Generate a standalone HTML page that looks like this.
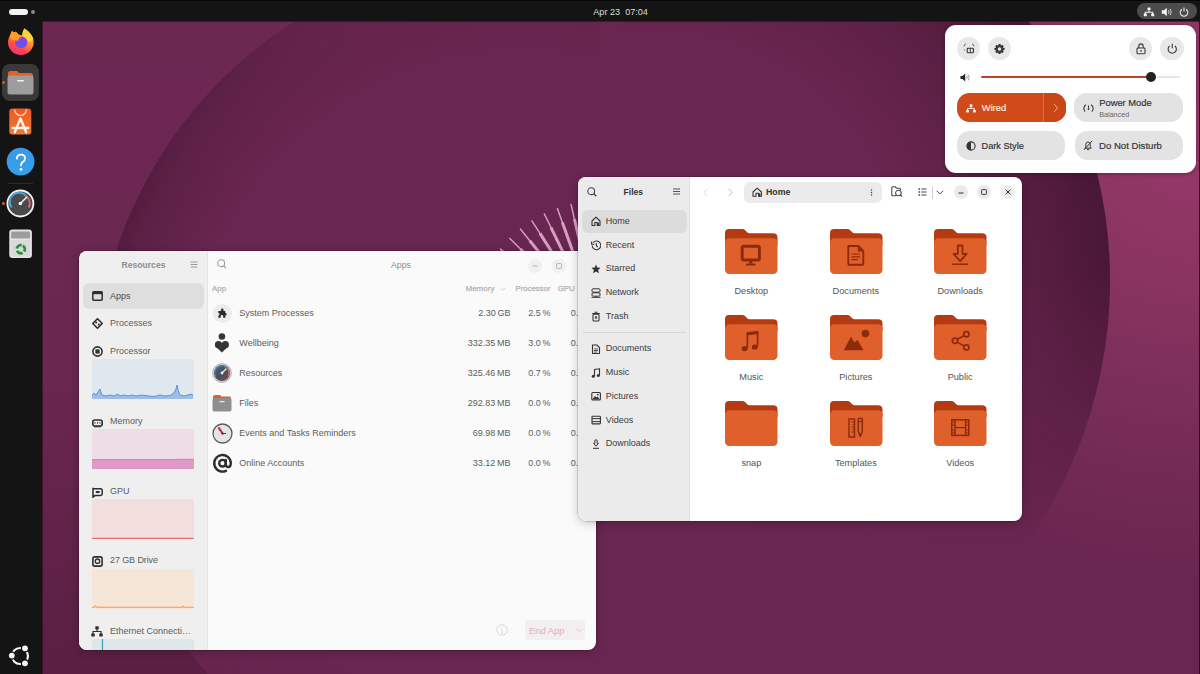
<!DOCTYPE html>
<html><head><meta charset="utf-8">
<style>
*{box-sizing:border-box;margin:0;padding:0}
html,body{width:1200px;height:674px;overflow:hidden;background:#6a2650;font-family:"Liberation Sans",sans-serif}
.abs{position:absolute}
#wall{position:absolute;left:0;top:0;width:1200px;height:674px}
#topbar{position:absolute;left:0;top:0;width:1200px;height:21px;background:#141414;border-top:1px solid #050505;box-shadow:0 1px 0 rgba(40,5,25,.55);z-index:2}
#dock{position:absolute;left:0;top:20px;width:42px;height:654px;background:#141414;box-shadow:1px 0 0 rgba(40,5,25,.55);z-index:1}
.win{position:absolute;border-radius:8px;overflow:hidden;box-shadow:0 0 0 0.5px rgba(0,0,0,.25),0 2px 10px rgba(0,0,0,.22)}
#res{left:79px;top:251px;width:517px;height:399px;background:#fafafa}
#res .side{position:absolute;left:0;top:0;width:129px;height:399px;background:#efefef;border-right:1px solid #e4e4e4}
#files{left:578px;top:177px;width:444px;height:344px;background:#fff}
#files .side{position:absolute;left:0;top:0;width:112px;height:344px;background:#ebebeb;border-right:1px solid #dedede}
#qs{position:absolute;left:945px;top:25px;width:251px;height:148px;background:#fff;border-radius:11px;box-shadow:0 1px 4px rgba(0,0,0,.3)}
.t{position:absolute;white-space:nowrap;line-height:1}
</style></head><body>
<svg id="wall" width="1200" height="674" viewBox="0 0 1200 674">
  <defs>
    <radialGradient id="pinkg" cx="1200" cy="120" r="460" gradientUnits="userSpaceOnUse">
      <stop offset="0" stop-color="#98396b"/>
      <stop offset="0.35" stop-color="#8a3461"/>
      <stop offset="0.7" stop-color="#762c57"/>
      <stop offset="1" stop-color="#692650"/>
    </radialGradient>
    <radialGradient id="tlg" cx="40" cy="20" r="300" gradientUnits="userSpaceOnUse">
      <stop offset="0" stop-color="#6a2852"/>
      <stop offset="0.5" stop-color="#6e2853"/>
      <stop offset="1" stop-color="#6e2853" stop-opacity="0"/>
    </radialGradient>
    <radialGradient id="rimL" cx="524" cy="384" r="429" gradientUnits="userSpaceOnUse">
      <stop offset="0" stop-color="#4a1836" stop-opacity="0"/>
      <stop offset="0.78" stop-color="#4a1836" stop-opacity="0"/>
      <stop offset="0.95" stop-color="#4a1836" stop-opacity="0.4"/>
      <stop offset="1" stop-color="#4a1836" stop-opacity="0.68"/>
    </radialGradient>
    <radialGradient id="rimR" cx="655" cy="281" r="455" gradientUnits="userSpaceOnUse">
      <stop offset="0" stop-color="#4a1836" stop-opacity="0"/>
      <stop offset="0.55" stop-color="#4a1836" stop-opacity="0"/>
      <stop offset="0.8" stop-color="#471633" stop-opacity="0.45"/>
      <stop offset="0.96" stop-color="#421430" stop-opacity="0.8"/>
      <stop offset="1" stop-color="#421430" stop-opacity="0.88"/>
    </radialGradient>
    <linearGradient id="fadeL" x1="0" y1="0" x2="0" y2="674" gradientUnits="userSpaceOnUse">
      <stop offset="0" stop-color="#fff" stop-opacity="0.2"/>
      <stop offset="0.1" stop-color="#fff" stop-opacity="0.6"/>
      <stop offset="0.3" stop-color="#fff" stop-opacity="1"/>
      <stop offset="0.6" stop-color="#fff" stop-opacity="0.8"/>
      <stop offset="0.9" stop-color="#fff" stop-opacity="0.1"/>
    </linearGradient>
    <linearGradient id="fadeR" x1="0" y1="0" x2="0" y2="674" gradientUnits="userSpaceOnUse">
      <stop offset="0" stop-color="#fff" stop-opacity="1"/>
      <stop offset="0.4" stop-color="#fff" stop-opacity="0.9"/>
      <stop offset="0.62" stop-color="#fff" stop-opacity="0.35"/>
      <stop offset="0.8" stop-color="#fff" stop-opacity="0"/>
    </linearGradient>
    <linearGradient id="outLg" x1="0" y1="0" x2="0" y2="674" gradientUnits="userSpaceOnUse">
      <stop offset="0" stop-color="#6c2852"/>
      <stop offset="0.55" stop-color="#6a2750"/>
      <stop offset="1" stop-color="#5a1f43"/>
    </linearGradient>
    <mask id="mL"><rect width="600" height="674" fill="url(#fadeL)"/></mask>
    <mask id="mR"><rect x="620" width="580" height="674" fill="url(#fadeR)"/></mask>
    <mask id="outR"><rect width="1200" height="674" fill="#fff"/><circle cx="655" cy="281" r="455" fill="#000"/></mask>
    <mask id="outL"><rect width="1200" height="674" fill="#fff"/><circle cx="524" cy="384" r="429" fill="#000"/></mask>
  </defs>
  <rect width="1200" height="674" fill="#692650"/>
  <rect width="1200" height="674" fill="url(#pinkg)" mask="url(#outR)"/>
  <rect width="600" height="674" fill="url(#outLg)" mask="url(#outL)"/>
  <circle cx="524" cy="384" r="429" fill="url(#rimL)" mask="url(#mL)"/>
  <circle cx="655" cy="281" r="455" fill="url(#rimR)" mask="url(#mR)"/>
  <g><path d="M485.5 273.1L499.0 279.6" stroke="#d6a2c3" stroke-width="1.4" stroke-linecap="round"/><path d="M499.0 279.6L545.9 302.1" stroke="#d3a0c1" stroke-width="3"/><path d="M492.3 260.7L505.0 268.6" stroke="#d6a2c3" stroke-width="1.4" stroke-linecap="round"/><path d="M505.0 268.6L549.1 296.2" stroke="#d3a0c1" stroke-width="3"/><path d="M500.5 249.1L512.2 258.4" stroke="#d6a2c3" stroke-width="1.4" stroke-linecap="round"/><path d="M512.2 258.4L553.0 290.7" stroke="#d3a0c1" stroke-width="3"/><path d="M509.9 238.5L520.5 249.1" stroke="#d6a2c3" stroke-width="1.4" stroke-linecap="round"/><path d="M520.5 249.1L557.4 285.7" stroke="#d3a0c1" stroke-width="3"/><path d="M520.4 229.0L529.8 240.7" stroke="#d6a2c3" stroke-width="1.4" stroke-linecap="round"/><path d="M529.8 240.7L562.4 281.2" stroke="#d3a0c1" stroke-width="3"/><path d="M531.9 220.8L540.0 233.4" stroke="#d6a2c3" stroke-width="1.4" stroke-linecap="round"/><path d="M540.0 233.4L567.9 277.3" stroke="#d3a0c1" stroke-width="3"/><path d="M544.3 213.9L550.9 227.3" stroke="#d6a2c3" stroke-width="1.4" stroke-linecap="round"/><path d="M550.9 227.3L573.7 274.1" stroke="#d3a0c1" stroke-width="3"/><path d="M557.4 208.4L562.4 222.5" stroke="#d6a2c3" stroke-width="1.4" stroke-linecap="round"/><path d="M562.4 222.5L579.9 271.5" stroke="#d3a0c1" stroke-width="3"/><path d="M571.0 204.4L574.4 219.0" stroke="#d6a2c3" stroke-width="1.4" stroke-linecap="round"/><path d="M574.4 219.0L586.3 269.6" stroke="#d3a0c1" stroke-width="3"/><path d="M585.0 201.9L586.7 216.8" stroke="#d6a2c3" stroke-width="1.4" stroke-linecap="round"/><path d="M586.7 216.8L592.9 268.4" stroke="#d3a0c1" stroke-width="3"/><path d="M599.1 201.0L599.2 216.0" stroke="#d6a2c3" stroke-width="1.4" stroke-linecap="round"/><path d="M599.2 216.0L599.6 268.0" stroke="#d3a0c1" stroke-width="3"/><path d="M613.3 201.7L611.7 216.6" stroke="#d6a2c3" stroke-width="1.4" stroke-linecap="round"/><path d="M611.7 216.6L606.3 268.3" stroke="#d3a0c1" stroke-width="3"/></g>
  <rect x="1199" y="0" width="1" height="674" fill="#2a0c20"/>
</svg>

<div id="topbar">
  <div class="abs" style="left:9px;top:8px;width:19px;height:6px;border-radius:3px;background:#f2f2f2"></div>
  <div class="abs" style="left:31px;top:9px;width:4px;height:4px;border-radius:2px;background:#8a8a8a"></div>
  <div class="t" style="left:593.3px;top:6.6px;font-size:9.1px;color:#dedede">Apr 23&nbsp;&nbsp;07:04</div>
  <div class="abs" style="left:1137px;top:2px;width:60px;height:16px;border-radius:8px;background:#4c4c4c"></div>
  <svg class="abs" style="left:1143px;top:6px" width="12" height="10" viewBox="0 0 12 10"><rect x="4.5" y="0.5" width="3" height="2.6" rx=".6" fill="#f4f4f4"/><path d="M6 3v2M2.3 7V5.2h7.4V7" stroke="#f4f4f4" stroke-width="1.1" fill="none"/><rect x="0.8" y="6.6" width="3" height="2.6" rx=".6" fill="#f4f4f4"/><rect x="8.2" y="6.6" width="3" height="2.6" rx=".6" fill="#f4f4f4"/></svg>
  <svg class="abs" style="left:1161px;top:6px" width="12" height="10" viewBox="0 0 12 10"><path d="M0.8 3.3h2.2L5.8 0.8v8.4L3 6.7H0.8z" fill="#f4f4f4"/><path d="M7.5 3.2q1 1.8 0 3.6M9.2 1.8q2 3.2 0 6.4" stroke="#cfcfcf" stroke-width="1" fill="none"/></svg>
  <svg class="abs" style="left:1179px;top:6px" width="10" height="10" viewBox="0 0 10 10"><path d="M3 2.2A3.8 3.8 0 1 0 7 2.2" stroke="#e8e8e8" stroke-width="1.1" fill="none"/><path d="M5 0.6v4" stroke="#e8e8e8" stroke-width="1.1"/></svg>
</div>
<div id="dock">
  <svg class="abs" style="left:6px;top:7px" width="30" height="30" viewBox="0 0 30 30">
    <defs>
      <linearGradient id="ffo" x1="0.8" y1="0" x2="0.25" y2="1"><stop offset="0" stop-color="#ffe03a"/><stop offset="0.35" stop-color="#ffa12a"/><stop offset="0.7" stop-color="#ff4a4a"/><stop offset="1" stop-color="#f0317a"/></linearGradient>
      <radialGradient id="ffp" cx="0.45" cy="0.75" r="0.9"><stop offset="0" stop-color="#5b5cf0"/><stop offset="0.7" stop-color="#8a3ee0"/><stop offset="1" stop-color="#b53bd0"/></radialGradient>
    </defs>
    <circle cx="14.8" cy="15.2" r="12.8" fill="url(#ffo)"/>
    <path d="M1.5 0 L5 5.2 L6.2 3.6 L7.6 5.6 L9.8 4.8 L12.5 7.5 L16.2 8.6 L17.2 3.5 L18.2 0z" fill="#141414"/>
    <path d="M16.2 9 Q16.5 4 18.3 1.2 Q25 5.5 27.4 12 L24 15z" fill="#ffd23a"/>
    <circle cx="15.2" cy="15.3" r="6" fill="url(#ffp)"/>
    <path d="M4 9 L5 5.2 L6.2 3.6 L7.6 5.6 L9.8 4.8 L12.5 7.5 L16.5 9.2 Q12.5 11 12 14 Q9.5 12.8 7.5 13.5 L4.5 12z" fill="#ff9a22"/>
  </svg>
  <div class="abs" style="left:2px;top:44px;width:37px;height:37px;border-radius:8px;background:#393939"></div>
  <div class="abs" style="left:2px;top:61px;width:3px;height:3px;border-radius:2px;background:#e0542a"></div>
  <svg class="abs" style="left:7px;top:50px" width="27" height="25" viewBox="0 0 27 25">
    <path d="M1 3.5Q1 1 3.5 1H10L12 3H24Q26 3 26 5.5V9H1z" fill="#e2602a"/>
    <rect x="0.5" y="5.5" width="26" height="19" rx="2.5" fill="#9d9d9d"/>
    <rect x="10" y="10" width="7" height="1.6" rx=".8" fill="#f2f2f2"/>
  </svg>
  <svg class="abs" style="left:9px;top:88px" width="23" height="27" viewBox="0 0 23 27">
    <defs><linearGradient id="acg" x1="0" y1="0" x2="0" y2="1"><stop offset="0" stop-color="#ec5a22"/><stop offset="1" stop-color="#f07a36"/></linearGradient></defs>
    <rect x="0.3" y="0.5" width="22" height="26" rx="3" fill="url(#acg)"/>
    <path d="M5.7 1.5a5.8 6 0 0 0 11.6 0" stroke="#fde3d2" stroke-width="1.2" fill="none"/>
    <path d="M11.5 10.5L5.8 24.2M11.5 10.5L17.2 24.2M3.6 20H19.4" stroke="#fff3ec" stroke-width="2.3" fill="none" stroke-linecap="round"/>
  </svg>
  <svg class="abs" style="left:6px;top:127px" width="29" height="29" viewBox="0 0 29 29">
    <defs><linearGradient id="hlp" x1="0" y1="0" x2="0" y2="1"><stop offset="0" stop-color="#3d98e6"/><stop offset="1" stop-color="#35a0ea"/></linearGradient></defs>
    <circle cx="14.6" cy="14.6" r="13.9" fill="url(#hlp)"/>
    <path d="M10.8 11.6Q11 7.6 15 7.6T19 11.4Q19 13.8 16.6 15.1Q15 16 15 18.4" stroke="#fff" stroke-width="1.8" fill="none" stroke-linecap="round"/>
    <circle cx="15" cy="22.4" r="1.4" fill="#fff"/>
  </svg>
  <div class="abs" style="left:8px;top:163px;width:25px;height:1px;background:#2c2c2c"></div>
  <svg class="abs" style="left:6px;top:169px" width="29" height="29" viewBox="0 0 29 29">
    <circle cx="14.4" cy="14.5" r="13" fill="#4a4a4a" stroke="#f4f4f4" stroke-width="1.8"/>
    <path d="M5.6 18.5A9.2 9.2 0 0 1 20.5 7.5" stroke="#49a3df" stroke-width="2" fill="none"/>
    <path d="M20.5 7.5A9.2 9.2 0 0 1 22.8 18.5" stroke="#d8647a" stroke-width="2" fill="none"/>
    <path d="M14.4 14.5L20.6 8.3" stroke="#f4f4f4" stroke-width="1.5" stroke-linecap="round"/>
    <circle cx="14.4" cy="14.5" r="1.8" fill="#f4f4f4"/>
  </svg>
  <div class="abs" style="left:2px;top:182px;width:3px;height:3px;border-radius:2px;background:#e0542a"></div>
  <svg class="abs" style="left:9px;top:209px" width="24" height="30" viewBox="0 0 24 30">
    <rect x="0.3" y="0.6" width="22.6" height="28.4" rx="3.2" fill="#e4e4e4"/>
    <rect x="2.1" y="2.6" width="19" height="7" rx="1.4" fill="#9d9d9d"/>
    <path d="M1.8 11H21.4L21 26.5Q20.8 27.4 19.8 27.4H3.4Q2.4 27.4 2.2 26.5z" fill="#d9d9d9"/>
    <circle cx="11.8" cy="20.2" r="4" fill="none" stroke="#2f8f3c" stroke-width="2.8" stroke-dasharray="6.5 1.9" transform="rotate(-60 11.8 20.2)"/>
  </svg>
  <svg class="abs" style="left:8px;top:624px" width="25" height="25" viewBox="0 0 25 25">
    <circle cx="12" cy="12" r="8" stroke="#f4f4f4" stroke-width="2.2" fill="none"/>
    <circle cx="17" cy="4.3" r="4.2" fill="#141414"/><circle cx="3.8" cy="11.6" r="4.2" fill="#141414"/><circle cx="17" cy="19.3" r="4.2" fill="#141414"/>
    <circle cx="17" cy="4.3" r="2.9" fill="#f4f4f4"/>
    <circle cx="3.8" cy="11.6" r="2.9" fill="#f4f4f4"/>
    <circle cx="17" cy="19.3" r="2.9" fill="#f4f4f4"/>
  </svg>
</div>

<div id="res" class="win">
<div class="side"></div>
<div class="t" style="left:-85.50px;width:300px;text-align:center;top:9.72px;font-size:8.6px;color:#8e8e8e;font-weight:700;">Resources</div>
<svg class="abs" style="left:111px;top:10px" width="8" height="7" viewBox="0 0 8 7"><path d="M0.5 1h7M0.5 3.5h7M0.5 6h7" stroke="#9a9a9a" stroke-width="1"/></svg>
<div class="abs" style="left:4px;top:32px;width:121px;height:26px;background:#dedede;border-radius:6px;"></div>
<svg class="abs" style="left:13px;top:40px" width="11" height="10" viewBox="0 0 11 10"><rect x="0.8" y="0.8" width="9.4" height="8.4" rx="1" fill="none" stroke="#2e2e2e" stroke-width="1.5"/><rect x="0.8" y="0.8" width="9.4" height="2.4" fill="#2e2e2e"/></svg>
<div class="t" style="left:31.00px;top:41.08px;font-size:9px;color:#4a4a4a;font-weight:400;">Apps</div>
<svg class="abs" style="left:13px;top:67px" width="11" height="11" viewBox="0 0 11 11"><path d="M5.5 0.8L10.2 5.5L5.5 10.2L0.8 5.5z" fill="none" stroke="#2e2e2e" stroke-width="1.6" stroke-linejoin="round"/><circle cx="4.2" cy="4.6" r="1" fill="#2e2e2e"/><circle cx="6.8" cy="6.4" r="1" fill="#2e2e2e"/></svg>
<div class="t" style="left:31.00px;top:68.38px;font-size:9px;color:#5c5c5c;font-weight:400;">Processes</div>
<svg class="abs" style="left:13px;top:95px" width="11" height="11" viewBox="0 0 11 11"><circle cx="5.5" cy="5.5" r="4.6" fill="none" stroke="#2e2e2e" stroke-width="1.6"/><rect x="3.4" y="3.4" width="4.2" height="4.2" fill="#2e2e2e"/></svg>
<div class="t" style="left:31.00px;top:95.68px;font-size:9px;color:#5c5c5c;font-weight:400;">Processor</div>
<svg class="abs" style="left:13px;top:108px" width="102" height="40" viewBox="0 0 102 40"><rect width="102" height="40" rx="2" fill="#dfe7ef"/><path d="M0 40 L0 37 L2 34 L4 36 L6 33 L8 30 L10 36 L14 37 L18 36 L22 37 L26 35 L28 37 L32 36 L36 37 L40 36 L44 37 L50 36 L56 37 L62 37.5 L68 36 L72 37 L78 36.5 L82 34 L84 30 L85 26 L86 31 L88 36 L92 37 L96 36 L99 35 L101 36 L101 40z" fill="#9dbde6"/><path d="M0 37 L2 34 L4 36 L6 33 L8 30 L10 36 L14 37 L18 36 L22 37 L26 35 L28 37 L32 36 L36 37 L40 36 L44 37 L50 36 L56 37 L62 37.5 L68 36 L72 37 L78 36.5 L82 34 L84 30 L85 26 L86 31 L88 36 L92 37 L96 36 L99 35 L101 36" fill="none" stroke="#5b93d9" stroke-width="1"/></svg>
<svg class="abs" style="left:13px;top:168px" width="11" height="9" viewBox="0 0 11 9"><rect x="0.8" y="1" width="9.4" height="6" rx="2" fill="none" stroke="#2e2e2e" stroke-width="1.6"/><path d="M3 3.2v1.5M5.5 3.2v1.5M8 3.2v1.5" stroke="#2e2e2e" stroke-width="1"/><path d="M2 7.8h7" stroke="#2e2e2e" stroke-width="1"/></svg>
<div class="t" style="left:31.00px;top:165.68px;font-size:9px;color:#5c5c5c;font-weight:400;">Memory</div>
<svg class="abs" style="left:13px;top:178px" width="102" height="40" viewBox="0 0 102 40"><rect width="102" height="40" rx="2" fill="#eedde7"/><rect x="0" y="30.5" width="102" height="9.5" fill="#e19ac6"/><path d="M0 30.7H82L86 30.3H102" stroke="#cf7eb0" stroke-width="1" fill="none"/></svg>
<svg class="abs" style="left:13px;top:236px" width="11" height="11" viewBox="0 0 11 11"><path d="M1 0.8v9.4l2.2-1.8H8.5Q10.2 8.4 10.2 6.7V3.5Q10.2 1.8 8.5 1.8H1" fill="none" stroke="#2e2e2e" stroke-width="1.5"/><rect x="3.8" y="4" width="3.8" height="2" fill="#2e2e2e"/></svg>
<div class="t" style="left:31.00px;top:235.78px;font-size:9px;color:#5c5c5c;font-weight:400;">GPU</div>
<svg class="abs" style="left:13px;top:248px" width="102" height="40" viewBox="0 0 102 40"><rect width="102" height="40" rx="2" fill="#f3dede"/><path d="M0 39.3H102" stroke="#e86f78" stroke-width="1.2"/></svg>
<svg class="abs" style="left:13px;top:305px" width="11" height="11" viewBox="0 0 11 11"><rect x="0.9" y="0.9" width="9.2" height="9.2" rx="1.8" fill="none" stroke="#2e2e2e" stroke-width="1.6"/><circle cx="5.5" cy="5.2" r="2.2" fill="none" stroke="#2e2e2e" stroke-width="1.3"/></svg>
<div class="t" style="left:31.00px;top:305.48px;font-size:9px;color:#5c5c5c;font-weight:400;letter-spacing:-0.1px">27 GB Drive</div>
<svg class="abs" style="left:13px;top:318px" width="102" height="40" viewBox="0 0 102 40"><rect width="102" height="40" rx="2" fill="#f6e6d8"/><path d="M0 39H102V38.2H92L91 36.8L90 38.2H40L39 38L30 38.2H5L3.5 36.5L2 38.2H0z" fill="#f6c79a"/><path d="M0 38.2H2L3.5 36.5L5 38.2H90L91 36.8L92 38.2H102" fill="none" stroke="#f0a057" stroke-width="1"/></svg>
<svg class="abs" style="left:12px;top:375px" width="12" height="11" viewBox="0 0 12 11"><rect x="4.3" y="0.3" width="3.4" height="3" fill="#2e2e2e"/><path d="M6 3v2.5M2 8V5.5h8V8" stroke="#2e2e2e" stroke-width="1.2" fill="none"/><rect x="0.3" y="7.5" width="3.4" height="3" fill="#2e2e2e"/><rect x="8.3" y="7.5" width="3.4" height="3" fill="#2e2e2e"/></svg>
<div class="t" style="left:31.00px;top:375.68px;font-size:9px;color:#5c5c5c;font-weight:400;">Ethernet Connecti…</div>
<svg class="abs" style="left:13px;top:388px" width="102" height="12" viewBox="0 0 102 12"><rect width="102" height="20" rx="2" fill="#dde6e9"/><path d="M10.5 0V12" stroke="#3aa0b8" stroke-width="1.2"/></svg>
<svg class="abs" style="left:138px;top:8px" width="10" height="10" viewBox="0 0 10 10"><circle cx="4.2" cy="4.2" r="3.4" fill="none" stroke="#9b9b9b" stroke-width="1.1"/><path d="M6.8 6.8L9.2 9.2" stroke="#9b9b9b" stroke-width="1.2"/></svg>
<div class="t" style="left:172.00px;width:300px;text-align:center;top:9.55px;font-size:8.8px;color:#8e8e8e;font-weight:400;">Apps</div>
<div class="abs" style="left:449px;top:8px;width:14px;height:14px;border-radius:7px;background:#f0f0f0"></div>
<svg class="abs" style="left:453px;top:14px" width="6" height="2" viewBox="0 0 6 2"><path d="M0.5 1h5" stroke="#b5b5b5" stroke-width="1"/></svg>
<div class="abs" style="left:472.5px;top:8px;width:14px;height:14px;border-radius:7px;background:#f0f0f0"></div>
<svg class="abs" style="left:476.5px;top:11.5px" width="6" height="6" viewBox="0 0 6 6"><rect x="0.6" y="0.6" width="4.8" height="4.8" rx=".6" fill="none" stroke="#b5b5b5" stroke-width="1"/></svg>
<div class="t" style="left:133.00px;top:33.61px;font-size:7.9px;color:#b3b3b3;font-weight:400;-webkit-text-stroke:0.25px currentColor">App</div>
<div class="t" style="left:386.50px;top:33.53px;font-size:8.0px;color:#b3b3b3;font-weight:400;-webkit-text-stroke:0.25px currentColor">Memory</div>
<svg class="abs" style="left:421px;top:36px" width="6" height="4" viewBox="0 0 6 4"><path d="M0.5 0.8L3 3.2L5.5 0.8" stroke="#cfcfcf" stroke-width="0.9" fill="none"/></svg>
<div class="t" style="left:436.50px;top:33.74px;font-size:7.75px;color:#b3b3b3;font-weight:400;-webkit-text-stroke:0.25px currentColor">Processor</div>
<div class="t" style="left:478.70px;top:33.61px;font-size:7.9px;color:#b3b3b3;font-weight:400;-webkit-text-stroke:0.25px currentColor">GPU</div>
<div class="t" style="left:160.30px;top:57.88px;font-size:9px;color:#5c5c5c;font-weight:400;">System Processes</div>
<div class="t" style="right:85.50px;top:57.88px;font-size:9px;color:#5c5c5c;font-weight:400;">2.30&#8201;GB</div>
<div class="t" style="right:45.50px;top:57.88px;font-size:9px;color:#5c5c5c;font-weight:400;">2.5&#8201;%</div>
<div class="t" style="left:491.70px;top:57.88px;font-size:9px;color:#5c5c5c;font-weight:400;">0.</div>
<div class="t" style="left:160.30px;top:87.88px;font-size:9px;color:#5c5c5c;font-weight:400;">Wellbeing</div>
<div class="t" style="right:85.50px;top:87.88px;font-size:9px;color:#5c5c5c;font-weight:400;">332.35&#8201;MB</div>
<div class="t" style="right:45.50px;top:87.88px;font-size:9px;color:#5c5c5c;font-weight:400;">3.0&#8201;%</div>
<div class="t" style="left:491.70px;top:87.88px;font-size:9px;color:#5c5c5c;font-weight:400;">0.</div>
<div class="t" style="left:160.30px;top:117.88px;font-size:9px;color:#5c5c5c;font-weight:400;">Resources</div>
<div class="t" style="right:85.50px;top:117.88px;font-size:9px;color:#5c5c5c;font-weight:400;">325.46&#8201;MB</div>
<div class="t" style="right:45.50px;top:117.88px;font-size:9px;color:#5c5c5c;font-weight:400;">0.7&#8201;%</div>
<div class="t" style="left:491.70px;top:117.88px;font-size:9px;color:#5c5c5c;font-weight:400;">0.</div>
<div class="t" style="left:160.30px;top:147.88px;font-size:9px;color:#5c5c5c;font-weight:400;">Files</div>
<div class="t" style="right:85.50px;top:147.88px;font-size:9px;color:#5c5c5c;font-weight:400;">292.83&#8201;MB</div>
<div class="t" style="right:45.50px;top:147.88px;font-size:9px;color:#5c5c5c;font-weight:400;">0.0&#8201;%</div>
<div class="t" style="left:491.70px;top:147.88px;font-size:9px;color:#5c5c5c;font-weight:400;">0.</div>
<div class="t" style="left:160.30px;top:177.88px;font-size:9px;color:#5c5c5c;font-weight:400;">Events and Tasks Reminders</div>
<div class="t" style="right:85.50px;top:177.88px;font-size:9px;color:#5c5c5c;font-weight:400;">69.98&#8201;MB</div>
<div class="t" style="right:45.50px;top:177.88px;font-size:9px;color:#5c5c5c;font-weight:400;">0.0&#8201;%</div>
<div class="t" style="left:491.70px;top:177.88px;font-size:9px;color:#5c5c5c;font-weight:400;">0.</div>
<div class="t" style="left:160.30px;top:207.88px;font-size:9px;color:#5c5c5c;font-weight:400;">Online Accounts</div>
<div class="t" style="right:85.50px;top:207.88px;font-size:9px;color:#5c5c5c;font-weight:400;">33.12&#8201;MB</div>
<div class="t" style="right:45.50px;top:207.88px;font-size:9px;color:#5c5c5c;font-weight:400;">0.0&#8201;%</div>
<div class="t" style="left:491.70px;top:207.88px;font-size:9px;color:#5c5c5c;font-weight:400;">0.</div>
<div class="abs" style="left:133.5px;top:52.5px;width:19px;height:19px;border-radius:10px;background:#ececec"></div>
<svg class="abs" style="left:137px;top:56px" width="12" height="12" viewBox="0 0 12 12"><path d="M4.6 1.5a1.4 1.4 0 0 1 2.8 0V3H9.5V5.2a1.4 1.4 0 0 1 0 2.8V10.5H7V9a1.4 1.4 0 0 0-2.8 0v1.5H1.5V8a1.4 1.4 0 0 0 0-2.8V3H4.6z" fill="#2a2a2a" transform="translate(6 6) scale(0.88) translate(-5.7 -5.2)"/></svg>
<svg class="abs" style="left:133px;top:81px" width="20" height="22" viewBox="0 0 20 22"><circle cx="9.9" cy="4.5" r="3.3" fill="#353535"/><circle cx="6.5" cy="12.7" r="3.6" fill="#353535"/><circle cx="13.3" cy="12.7" r="3.6" fill="#353535"/><path d="M3.05 14.1L9.9 20.4L16.75 14.1L9.9 11.5z" fill="#353535"/></svg>
<svg class="abs" style="left:133px;top:112px" width="20" height="20" viewBox="0 0 20 20"><circle cx="10" cy="10" r="9.3" fill="#dcdcdc" stroke="#9a9a9a" stroke-width="0.8"/><defs><linearGradient id="rsg" x1="0" y1="0" x2="1" y2="1"><stop offset="0" stop-color="#3d6a94"/><stop offset="0.55" stop-color="#4a4d57"/><stop offset="1" stop-color="#8a4a58"/></linearGradient></defs><circle cx="10" cy="10" r="8" fill="url(#rsg)"/><path d="M3.5 13A7 7 0 0 1 13.5 4" stroke="#5a9ad0" stroke-width="1.1" fill="none" stroke-dasharray="1.2 0.8"/><path d="M13.5 4A7 7 0 0 1 16.5 13" stroke="#d07080" stroke-width="1.1" fill="none"/><path d="M10 10L14 6" stroke="#eee" stroke-width="1.3" stroke-linecap="round"/><circle cx="10" cy="10" r="1.4" fill="#eee"/></svg>
<svg class="abs" style="left:133px;top:143px" width="20" height="18" viewBox="0 0 20 18"><path d="M1 3Q1 1 3 1H8L9.5 2.5H17.5Q19 2.5 19 4V6H1z" fill="#e0612d"/><rect x="0.5" y="4" width="19" height="13.5" rx="1.8" fill="#8f8f8f"/><rect x="7.3" y="7" width="5.4" height="1.2" rx=".5" fill="#e8e8e8"/></svg>
<svg class="abs" style="left:132.5px;top:171.5px" width="21" height="21" viewBox="0 0 21 21"><circle cx="10.5" cy="10.5" r="9.5" fill="#e4e4e4" stroke="#5a5a5a" stroke-width="1.3"/><path d="M10.5 10.5L7 5.2" stroke="#d22a40" stroke-width="2.2" stroke-linecap="round"/><path d="M10.5 10.5H14" stroke="#444" stroke-width="1" /><circle cx="10.5" cy="10.5" r="1" fill="#333"/></svg>
<svg class="abs" style="left:132.5px;top:201.5px" width="21" height="21" viewBox="0 0 21 21"><circle cx="10.5" cy="10.2" r="3.3" fill="none" stroke="#2e2e2e" stroke-width="2.4"/><path d="M13.8 7V11.2Q13.8 14 16.2 14Q18.8 14 18.8 10.2A8.3 8.3 0 1 0 14 17.8" fill="none" stroke="#2e2e2e" stroke-width="2.4" stroke-linecap="round"/></svg>
<svg class="abs" style="left:417px;top:373px" width="12" height="12" viewBox="0 0 12 12"><circle cx="6" cy="6" r="5.2" fill="none" stroke="#d6d6d6" stroke-width="1"/><path d="M6 5V9M5 9h2" stroke="#d6d6d6" stroke-width="1"/><circle cx="6" cy="3.3" r=".6" fill="#d6d6d6"/></svg>
<div class="abs" style="left:445.5px;top:368.5px;width:60px;height:20px;background:#f3eef0;border-radius:4px;"></div>
<div class="t" style="left:450.00px;top:374.55px;font-size:9.39px;color:#eab6c8;font-weight:400;-webkit-text-stroke:0.18px currentColor">End App</div>
<svg class="abs" style="left:496.5px;top:376.5px" width="7" height="5" viewBox="0 0 7 5"><path d="M0.6 0.8L3.5 3.8L6.4 0.8" stroke="#dccdd3" stroke-width="0.9" fill="none"/></svg>
</div>

<div id="files" class="win">
<div class="side"></div>
<svg class="abs" style="left:9px;top:9.5px" width="10" height="10" viewBox="0 0 10 10"><circle cx="4.2" cy="4.2" r="3.4" fill="none" stroke="#444" stroke-width="1.1"/><path d="M6.8 6.8L9.3 9.3" stroke="#444" stroke-width="1.3"/></svg>
<div class="t" style="left:-94.70px;width:300px;text-align:center;top:10.92px;font-size:8.6px;color:#333;font-weight:700;">Files</div>
<svg class="abs" style="left:94.5px;top:11px" width="7" height="7" viewBox="0 0 7 7"><path d="M0 1h7M0 3.5h7M0 6h7" stroke="#555" stroke-width="1"/></svg>
<div class="abs" style="left:4px;top:33px;width:104.8px;height:22.6px;background:#dcdcdc;border-radius:6px;"></div>
<svg class="abs" style="left:12.5px;top:39.400000000000006px" width="10" height="10.5" viewBox="0 0 10 10.5"><path d="M1 5L5 1.2L9 5V9.5H6.2V6.5H3.8V9.5H1z" fill="none" stroke="#333" stroke-width="1.1" stroke-linejoin="round"/><rect x="6.4" y="6.6" width="1.6" height="3" fill="#333"/></svg>
<div class="t" style="left:27.80px;top:39.98px;font-size:9px;color:#3a3a3a;font-weight:400;">Home</div>
<svg class="abs" style="left:12.5px;top:63.099999999999994px" width="10" height="10.5" viewBox="0 0 10 10.5"><path d="M2.2 2.6A4.3 4.3 0 1 1 1.2 5.5" fill="none" stroke="#333" stroke-width="1.1"/><path d="M0.6 1.5V4.2H3.3" fill="none" stroke="#333" stroke-width="1.1"/><path d="M5.3 3V5.6L6.8 7" fill="none" stroke="#333" stroke-width="1.1"/></svg>
<div class="t" style="left:27.80px;top:63.68px;font-size:9px;color:#3a3a3a;font-weight:400;">Recent</div>
<svg class="abs" style="left:12.5px;top:86.80000000000001px" width="10" height="10.5" viewBox="0 0 10 10.5"><path d="M5 0.6L6.3 3.6L9.5 3.8L7.1 5.9L7.9 9.2L5 7.4L2.1 9.2L2.9 5.9L0.5 3.8L3.7 3.6z" fill="#333"/></svg>
<div class="t" style="left:27.80px;top:87.38px;font-size:9px;color:#3a3a3a;font-weight:400;">Starred</div>
<svg class="abs" style="left:12.5px;top:110.5px" width="10" height="10.5" viewBox="0 0 10 10.5"><rect x="1" y="0.8" width="8" height="3.4" rx="1" fill="none" stroke="#333" stroke-width="1"/><rect x="1" y="4.8" width="8" height="3.4" rx="1" fill="none" stroke="#333" stroke-width="1"/><path d="M5 8.2V9.7M0.5 9.7H9.5" stroke="#333" stroke-width="1"/></svg>
<div class="t" style="left:27.80px;top:111.08px;font-size:9px;color:#3a3a3a;font-weight:400;">Network</div>
<svg class="abs" style="left:12.5px;top:134.2px" width="10" height="10.5" viewBox="0 0 10 10.5"><path d="M3.5 1.2H6.5M1.2 2.5H8.8" stroke="#333" stroke-width="1.1"/><rect x="2" y="3.2" width="6" height="6.8" rx="1" fill="none" stroke="#333" stroke-width="1.1"/><rect x="3.9" y="5" width="2.2" height="3" fill="#333" opacity=".7"/></svg>
<div class="t" style="left:27.80px;top:134.78px;font-size:9px;color:#3a3a3a;font-weight:400;">Trash</div>
<div class="abs" style="left:4.5px;top:155px;width:103.5px;height:1px;background:#d6d6d6;border-radius:0px;"></div>
<svg class="abs" style="left:12.5px;top:166.90000000000003px" width="10" height="10.5" viewBox="0 0 10 10.5"><path d="M1.5 1H5.8L8.5 3.7V9.5H1.5z" fill="none" stroke="#333" stroke-width="1.1" stroke-linejoin="round"/><path d="M3 5H7M3 6.5H7M3 8H6" stroke="#333" stroke-width=".8"/></svg>
<div class="t" style="left:27.80px;top:167.48px;font-size:9px;color:#3a3a3a;font-weight:400;">Documents</div>
<svg class="abs" style="left:12.5px;top:190.60000000000002px" width="10" height="10.5" viewBox="0 0 10 10.5"><path d="M3.5 8V1.5L8.5 0.8V7.3" fill="none" stroke="#333" stroke-width="1.1"/><circle cx="2.3" cy="8.2" r="1.5" fill="#333"/><circle cx="7.3" cy="7.5" r="1.5" fill="#333"/></svg>
<div class="t" style="left:27.80px;top:191.18px;font-size:9px;color:#3a3a3a;font-weight:400;">Music</div>
<svg class="abs" style="left:12.5px;top:214.3px" width="10" height="10.5" viewBox="0 0 10 10.5"><rect x="0.8" y="1.5" width="8.6" height="7.4" rx="1" fill="none" stroke="#333" stroke-width="1.1"/><path d="M1.8 8L4 5L5.5 6.5L6.6 5.6L8.4 8z" fill="#333"/><circle cx="6.8" cy="3.6" r=".9" fill="#333"/></svg>
<div class="t" style="left:27.80px;top:214.88px;font-size:9px;color:#3a3a3a;font-weight:400;">Pictures</div>
<svg class="abs" style="left:12.5px;top:238.00000000000006px" width="10" height="10.5" viewBox="0 0 10 10.5"><rect x="1" y="1.3" width="8.4" height="7.6" rx=".6" fill="none" stroke="#333" stroke-width="1.1"/><path d="M1 3.6H9.4M1 6.6H9.4" stroke="#333" stroke-width="1"/></svg>
<div class="t" style="left:27.80px;top:238.58px;font-size:9px;color:#3a3a3a;font-weight:400;">Videos</div>
<svg class="abs" style="left:12.5px;top:261.70000000000005px" width="10" height="10.5" viewBox="0 0 10 10.5"><path d="M3.8 4.5V1.8Q3.8 0.8 5 0.8Q6.2 0.8 6.2 1.8V4.5L7.4 4.5L5 7.2L2.6 4.5z" fill="none" stroke="#333" stroke-width="1" stroke-linejoin="round"/><path d="M2 9.3H8" stroke="#333" stroke-width="1"/></svg>
<div class="t" style="left:27.80px;top:262.28px;font-size:9px;color:#3a3a3a;font-weight:400;">Downloads</div>
<svg class="abs" style="left:124px;top:11px" width="7" height="9" viewBox="0 0 7 9"><path d="M5.5 0.8L1.8 4.5L5.5 8.2" fill="none" stroke="#d6d6d6" stroke-width="1"/></svg>
<svg class="abs" style="left:149px;top:11px" width="7" height="9" viewBox="0 0 7 9"><path d="M1.5 0.8L5.2 4.5L1.5 8.2" fill="none" stroke="#bdbdbd" stroke-width="1"/></svg>
<div class="abs" style="left:166.29999999999995px;top:4.5px;width:138.2px;height:21px;background:#ebebeb;border-radius:6px;"></div>
<svg class="abs" style="left:174px;top:10.199999999999989px" width="10.5" height="10" viewBox="0 0 10.5 10"><path d="M1 5L5.2 1.2L9.4 5V9.3H6.6V6.3H4V9.3H1z" fill="none" stroke="#333" stroke-width="1.1" stroke-linejoin="round"/><rect x="6.5" y="6.4" width="1.9" height="3" fill="#333"/></svg>
<div class="t" style="left:188.00px;top:11.05px;font-size:8.8px;color:#333;font-weight:700;">Home</div>
<svg class="abs" style="left:292px;top:11.5px" width="3" height="7" viewBox="0 0 3 7"><circle cx="1.5" cy="1" r=".75" fill="#444"/><circle cx="1.5" cy="3.5" r=".75" fill="#444"/><circle cx="1.5" cy="6" r=".75" fill="#444"/></svg>
<svg class="abs" style="left:313px;top:9px" width="12" height="11" viewBox="0 0 12 11"><path d="M5 9.8H1.8Q0.8 9.8 0.8 8.8V1.8Q0.8 0.8 1.8 0.8H4.2L5.5 2.2H8.5Q9.5 2.2 9.5 3.2V4" fill="none" stroke="#444" stroke-width="1.05"/><circle cx="7.4" cy="7" r="2.8" fill="none" stroke="#444" stroke-width="1.05"/><path d="M9.3 9L11 10.6" stroke="#444" stroke-width="1.1"/></svg>
<svg class="abs" style="left:339.5px;top:10.5px" width="9" height="8" viewBox="0 0 9 8"><path d="M0.5 1h1.6M0.5 4h1.6M0.5 7h1.6" stroke="#444" stroke-width="1.3"/><path d="M3.3 1H8.5M3.3 4H8.5M3.3 7H8.5" stroke="#444" stroke-width="1"/></svg>
<div class="abs" style="left:354.20000000000005px;top:8.5px;width:0.8px;height:13px;background:#cfcfcf;border-radius:0px;"></div>
<svg class="abs" style="left:357.79999999999995px;top:12.5px" width="8" height="5" viewBox="0 0 8 5"><path d="M0.6 0.8L3.8 4L7 0.8" fill="none" stroke="#444" stroke-width="1"/></svg>
<div class="abs" style="left:375.9px;top:7.900000000000006px;width:14.2px;height:14.2px;border-radius:7.1px;background:#ebebeb"></div>
<div class="abs" style="left:399.29999999999995px;top:7.900000000000006px;width:14.2px;height:14.2px;border-radius:7.1px;background:#ebebeb"></div>
<div class="abs" style="left:422.4px;top:7.900000000000006px;width:14.2px;height:14.2px;border-radius:7.1px;background:#ebebeb"></div>
<svg class="abs" style="left:380px;top:15.300000000000011px" width="6" height="2" viewBox="0 0 6 2"><path d="M0.5 1H5.5" stroke="#333" stroke-width="1"/></svg>
<svg class="abs" style="left:403.4px;top:12px" width="6" height="6" viewBox="0 0 6 6"><rect x="0.6" y="0.6" width="4.8" height="4.8" rx=".7" fill="none" stroke="#333" stroke-width="1"/></svg>
<svg class="abs" style="left:426.5px;top:12px" width="6" height="6" viewBox="0 0 6 6"><path d="M0.6 0.6L5.4 5.4M5.4 0.6L0.6 5.4" stroke="#333" stroke-width="1"/></svg>
<svg class="abs" style="left:147.10000000000002px;top:51.900000000000006px" width="53" height="46" viewBox="0 0 53 46"><path d="M0 4.2Q0 0 4 0H17.5Q19 0 20.2 1.2L22.5 3.6Q23.3 4.3 24.5 4.3H48Q52.5 4.3 52.5 8.5V16H0z" fill="#b43a12"/>
<rect x="0" y="9.3" width="52.5" height="35.7" rx="4.2" fill="#e0602c"/>
<g fill="#8c2a0c" stroke="#8c2a0c"><rect x="17.2" y="17.2" width="17.2" height="13.8" rx="1.6" fill="none" stroke-width="2.9"/><path d="M24 31.5h3.5v3.2H24z" stroke="none"/><rect x="21" y="34.6" width="9.5" height="1.9" stroke="none"/></g></svg>
<div class="t" style="left:23.35px;width:300px;text-align:center;top:109.81px;font-size:9.2px;color:#555;font-weight:400;">Desktop</div>
<svg class="abs" style="left:251.60000000000002px;top:51.900000000000006px" width="53" height="46" viewBox="0 0 53 46"><path d="M0 4.2Q0 0 4 0H17.5Q19 0 20.2 1.2L22.5 3.6Q23.3 4.3 24.5 4.3H48Q52.5 4.3 52.5 8.5V16H0z" fill="#b43a12"/>
<rect x="0" y="9.3" width="52.5" height="35.7" rx="4.2" fill="#e0602c"/>
<g fill="#8c2a0c" stroke="#8c2a0c"><path d="M18.3 17H28.3L33.3 22V34.8Q33.3 35.8 32.3 35.8H19.3Q18.3 35.8 18.3 34.8z" fill="none" stroke-width="1.9" stroke-linejoin="round"/><path d="M27.8 16.8V22.6H33.3z" stroke="none"/><path d="M21.5 25H30.2M21.5 27.8H30.2M21.5 30.6H28" stroke-width="1.2" fill="none"/></g></svg>
<div class="t" style="left:127.85px;width:300px;text-align:center;top:109.81px;font-size:9.2px;color:#555;font-weight:400;">Documents</div>
<svg class="abs" style="left:355.9px;top:51.900000000000006px" width="53" height="46" viewBox="0 0 53 46"><path d="M0 4.2Q0 0 4 0H17.5Q19 0 20.2 1.2L22.5 3.6Q23.3 4.3 24.5 4.3H48Q52.5 4.3 52.5 8.5V16H0z" fill="#b43a12"/>
<rect x="0" y="9.3" width="52.5" height="35.7" rx="4.2" fill="#e0602c"/>
<g fill="#8c2a0c" stroke="#8c2a0c"><path d="M23.8 16.5H28.5V24.8H32.7L26.15 32.2L19.6 24.8H23.8z" fill="none" stroke-width="1.8" stroke-linejoin="round"/><path d="M18.2 35.2H34" stroke-width="1.5"/></g></svg>
<div class="t" style="left:232.15px;width:300px;text-align:center;top:109.81px;font-size:9.2px;color:#555;font-weight:400;">Downloads</div>
<svg class="abs" style="left:147.10000000000002px;top:138.10000000000002px" width="53" height="46" viewBox="0 0 53 46"><path d="M0 4.2Q0 0 4 0H17.5Q19 0 20.2 1.2L22.5 3.6Q23.3 4.3 24.5 4.3H48Q52.5 4.3 52.5 8.5V16H0z" fill="#b43a12"/>
<rect x="0" y="9.3" width="52.5" height="35.7" rx="4.2" fill="#e0602c"/>
<g fill="#8c2a0c" stroke="#8c2a0c"><path d="M22.4 32.5V18.6M32.6 30.8V17" stroke-width="1.7" fill="none"/><path d="M21.6 17.2L33.4 15.7V19L21.6 20.5z" stroke="none"/><ellipse cx="19.6" cy="33.6" rx="3" ry="2.6" stroke="none"/><ellipse cx="29.8" cy="32" rx="3" ry="2.6" stroke="none"/></g></svg>
<div class="t" style="left:23.35px;width:300px;text-align:center;top:196.01px;font-size:9.2px;color:#555;font-weight:400;">Music</div>
<svg class="abs" style="left:251.60000000000002px;top:138.10000000000002px" width="53" height="46" viewBox="0 0 53 46"><path d="M0 4.2Q0 0 4 0H17.5Q19 0 20.2 1.2L22.5 3.6Q23.3 4.3 24.5 4.3H48Q52.5 4.3 52.5 8.5V16H0z" fill="#b43a12"/>
<rect x="0" y="9.3" width="52.5" height="35.7" rx="4.2" fill="#e0602c"/>
<g fill="#8c2a0c" stroke="#8c2a0c"><path d="M13.8 35.3L20.9 21.8L24.6 27.4L27.4 24.7L33.6 35.3z" stroke="none"/><circle cx="35.4" cy="18.6" r="3.8" stroke="none"/></g></svg>
<div class="t" style="left:127.85px;width:300px;text-align:center;top:196.01px;font-size:9.2px;color:#555;font-weight:400;">Pictures</div>
<svg class="abs" style="left:355.9px;top:138.10000000000002px" width="53" height="46" viewBox="0 0 53 46"><path d="M0 4.2Q0 0 4 0H17.5Q19 0 20.2 1.2L22.5 3.6Q23.3 4.3 24.5 4.3H48Q52.5 4.3 52.5 8.5V16H0z" fill="#b43a12"/>
<rect x="0" y="9.3" width="52.5" height="35.7" rx="4.2" fill="#e0602c"/>
<g fill="#8c2a0c" stroke="#8c2a0c"><circle cx="32.4" cy="19.2" r="2.6" fill="none" stroke-width="1.7"/><circle cx="21" cy="25.8" r="2.6" fill="none" stroke-width="1.7"/><circle cx="32.4" cy="32.4" r="2.6" fill="none" stroke-width="1.7"/><path d="M23.3 24.5L30.1 20.5M23.3 27.1L30.1 31.1" stroke-width="1.5"/></g></svg>
<div class="t" style="left:232.15px;width:300px;text-align:center;top:196.01px;font-size:9.2px;color:#555;font-weight:400;">Public</div>
<svg class="abs" style="left:147.10000000000002px;top:224.3px" width="53" height="46" viewBox="0 0 53 46"><path d="M0 4.2Q0 0 4 0H17.5Q19 0 20.2 1.2L22.5 3.6Q23.3 4.3 24.5 4.3H48Q52.5 4.3 52.5 8.5V16H0z" fill="#b43a12"/>
<rect x="0" y="9.3" width="52.5" height="35.7" rx="4.2" fill="#e0602c"/>
<g fill="#8c2a0c" stroke="#8c2a0c"></g></svg>
<div class="t" style="left:23.35px;width:300px;text-align:center;top:282.21px;font-size:9.2px;color:#555;font-weight:400;">snap</div>
<svg class="abs" style="left:251.60000000000002px;top:224.3px" width="53" height="46" viewBox="0 0 53 46"><path d="M0 4.2Q0 0 4 0H17.5Q19 0 20.2 1.2L22.5 3.6Q23.3 4.3 24.5 4.3H48Q52.5 4.3 52.5 8.5V16H0z" fill="#b43a12"/>
<rect x="0" y="9.3" width="52.5" height="35.7" rx="4.2" fill="#e0602c"/>
<g fill="#8c2a0c" stroke="#8c2a0c"><rect x="19" y="18" width="5.5" height="18" fill="none" stroke-width="1.4"/><path d="M21.5 21H24.5M22.5 23.5H24.5M21.5 26H24.5M22.5 28.5H24.5M21.5 31H24.5" stroke-width="1"/><path d="M28.3 17.5H32.3V30.5L30.3 35.5L28.3 30.5z" fill="none" stroke-width="1.5" stroke-linejoin="round"/><path d="M28.3 20.5H32.3" stroke-width="1.2"/><path d="M29.4 32.5L30.3 35.3L31.2 32.5z" stroke="none"/></g></svg>
<div class="t" style="left:127.85px;width:300px;text-align:center;top:282.21px;font-size:9.2px;color:#555;font-weight:400;">Templates</div>
<svg class="abs" style="left:355.9px;top:224.3px" width="53" height="46" viewBox="0 0 53 46"><path d="M0 4.2Q0 0 4 0H17.5Q19 0 20.2 1.2L22.5 3.6Q23.3 4.3 24.5 4.3H48Q52.5 4.3 52.5 8.5V16H0z" fill="#b43a12"/>
<rect x="0" y="9.3" width="52.5" height="35.7" rx="4.2" fill="#e0602c"/>
<g fill="#8c2a0c" stroke="#8c2a0c"><rect x="17.8" y="18.8" width="17" height="15.6" fill="none" stroke-width="1.5"/><path d="M21 18.8V34.4M31.6 18.8V34.4M21 26.6H31.6" stroke-width="1.4"/><path d="M17.8 21.3h3.2M17.8 24h3.2M17.8 29.2h3.2M17.8 31.9h3.2M31.6 21.3h3.2M31.6 24h3.2M31.6 29.2h3.2M31.6 31.9h3.2" stroke-width="0.9"/></g></svg>
<div class="t" style="left:232.15px;width:300px;text-align:center;top:282.21px;font-size:9.2px;color:#555;font-weight:400;">Videos</div>
</div>
<div id="qs">
<div class="abs" style="left:11.50px;top:12.00px;width:23.2px;height:23.2px;border-radius:12px;background:#e8e8e8"></div>
<div class="abs" style="left:42.90px;top:12.00px;width:23.2px;height:23.2px;border-radius:12px;background:#e8e8e8"></div>
<div class="abs" style="left:183.60px;top:12.00px;width:23.2px;height:23.2px;border-radius:12px;background:#e8e8e8"></div>
<div class="abs" style="left:215.40px;top:12.00px;width:23.2px;height:23.2px;border-radius:12px;background:#e8e8e8"></div>
<svg class="abs" style="left:17.5px;top:18px" width="12" height="11" viewBox="0 0 12 11"><path d="M1 3.2Q1.2 1.5 2.8 1M9.2 1Q10.8 1.5 11 3.2M1 6.5L1.8 7.6" stroke="#444" stroke-width="0.9" fill="none"/><rect x="4.2" y="5.2" width="6.2" height="4.6" rx=".8" fill="none" stroke="#333" stroke-width="1.1"/><path d="M7.3 5.2V9.8" stroke="#333" stroke-width=".9"/></svg>
<svg class="abs" style="left:49px;top:18.799999999999997px" width="11" height="10" viewBox="0 0 11 10"><g transform="translate(5.5 5)"><rect x="-1.2" y="-5" width="2.4" height="2.2" rx=".4" fill="#3a3a3a" transform="rotate(0)"/><rect x="-1.2" y="-5" width="2.4" height="2.2" rx=".4" fill="#3a3a3a" transform="rotate(45)"/><rect x="-1.2" y="-5" width="2.4" height="2.2" rx=".4" fill="#3a3a3a" transform="rotate(90)"/><rect x="-1.2" y="-5" width="2.4" height="2.2" rx=".4" fill="#3a3a3a" transform="rotate(135)"/><rect x="-1.2" y="-5" width="2.4" height="2.2" rx=".4" fill="#3a3a3a" transform="rotate(180)"/><rect x="-1.2" y="-5" width="2.4" height="2.2" rx=".4" fill="#3a3a3a" transform="rotate(225)"/><rect x="-1.2" y="-5" width="2.4" height="2.2" rx=".4" fill="#3a3a3a" transform="rotate(270)"/><rect x="-1.2" y="-5" width="2.4" height="2.2" rx=".4" fill="#3a3a3a" transform="rotate(315)"/><circle r="3.7" fill="#3a3a3a"/><circle r="1.7" fill="#e8e8e8"/></g></svg>
<svg class="abs" style="left:191.29999999999995px;top:18.200000000000003px" width="10" height="11.5" viewBox="0 0 10 11.5"><path d="M2.8 5V3.5Q2.8 0.9 5 0.9Q7.2 0.9 7.2 3.5V5" fill="none" stroke="#3a3a3a" stroke-width="1.1"/><rect x="1" y="5" width="8" height="5.8" rx=".9" fill="none" stroke="#3a3a3a" stroke-width="1.1"/><rect x="4.3" y="7.2" width="1.4" height="1.6" fill="#3a3a3a"/></svg>
<svg class="abs" style="left:221.5px;top:18.200000000000003px" width="10.5" height="10.5" viewBox="0 0 10.5 10.5"><path d="M2.6 3A4.1 4.1 0 1 0 7.9 3" fill="none" stroke="#3a3a3a" stroke-width="1.1"/><path d="M5.25 0.8V5.2" stroke="#3a3a3a" stroke-width="1.1"/></svg>
<svg class="abs" style="left:15px;top:47.5px" width="11" height="9" viewBox="0 0 11 9"><path d="M0.5 3H2.5L5.2 0.6V8.4L2.5 6H0.5z" fill="#222"/><path d="M6.7 2.8Q7.7 4.5 6.7 6.2M8.3 1.6Q10 4.5 8.3 7.4" stroke="#888" stroke-width=".8" fill="none"/></svg>
<div class="abs" style="left:36.39999999999998px;top:50.7px;width:170px;height:2.2px;background:#b9441d;border-radius:1.1px;"></div>
<div class="abs" style="left:212px;top:51px;width:23px;height:1.6px;background:#e6e6e6;border-radius:0.8px;"></div>
<div class="abs" style="left:201.20px;top:46.80px;width:10px;height:10px;border-radius:5px;background:#222"></div>
<div class="abs" style="left:11.799999999999955px;top:68.3px;width:108.8px;height:29.2px;background:#d14a19;border-radius:12.5px;"></div>
<div class="abs" style="left:98.75px;top:68.3px;width:21.85px;height:29.2px;background:#c94617;border-radius:0px;border-radius:0 12.5px 12.5px 0"></div>
<div class="abs" style="left:98.29999999999995px;top:68.3px;width:0.7px;height:29.2px;background:#e17044;border-radius:0px;"></div>
<svg class="abs" style="left:20.5px;top:78.5px" width="10" height="9" viewBox="0 0 10 9"><rect x="3.6" y="0.3" width="2.8" height="2.6" rx=".5" fill="#fbe9df"/><path d="M5 2.6V4.3M1.6 6.2V4.5H8.4V6.2" stroke="#fbe9df" stroke-width="1" fill="none"/><rect x="0.2" y="6" width="2.8" height="2.6" rx=".5" fill="#fbe9df"/><rect x="7" y="6" width="2.8" height="2.6" rx=".5" fill="#fbe9df"/></svg>
<div class="t" style="left:36.80px;top:78.76px;font-size:9.38px;color:#fbe9df;font-weight:400;-webkit-text-stroke:0.18px currentColor">Wired</div>
<svg class="abs" style="left:107.5px;top:78.3px" width="6" height="10" viewBox="0 0 6 10"><path d="M1 0.8L4.6 5L1 9.2" stroke="#f2b59b" stroke-width="0.9" fill="none"/></svg>
<div class="abs" style="left:129.20000000000005px;top:68.3px;width:109.3px;height:29.2px;background:#e3e3e3;border-radius:12.5px;"></div>
<svg class="abs" style="left:137.79999999999995px;top:77.8px" width="11" height="10" viewBox="0 0 11 10"><path d="M2.2 8.6A4.2 4.2 0 0 1 3 1.8M8 1.8A4.2 4.2 0 0 1 8.8 8.6" stroke="#3a3a3a" stroke-width="1.1" fill="none"/><path d="M5.5 2.5V5.5" stroke="#3a3a3a" stroke-width="1"/><circle cx="5.5" cy="6.2" r=".9" fill="#3a3a3a"/></svg>
<div class="t" style="left:154.20px;top:73.97px;font-size:9.37px;color:#333;font-weight:400;-webkit-text-stroke:0.18px currentColor">Power Mode</div>
<div class="t" style="left:154.20px;top:85.51px;font-size:7.2px;color:#666;font-weight:400;">Balanced</div>
<div class="abs" style="left:12.100000000000023px;top:105.69999999999999px;width:108.3px;height:29px;background:#e3e3e3;border-radius:12.5px;"></div>
<svg class="abs" style="left:20.799999999999955px;top:115.6px" width="10" height="10" viewBox="0 0 10 10"><circle cx="5" cy="5" r="4.1" fill="none" stroke="#333" stroke-width="1.1"/><path d="M5 0.9A4.1 4.1 0 0 0 5 9.1z" fill="#333"/></svg>
<div class="t" style="left:36.60px;top:117.04px;font-size:9.17px;color:#333;font-weight:400;-webkit-text-stroke:0.18px currentColor">Dark Style</div>
<div class="abs" style="left:129.5px;top:105.69999999999999px;width:108.2px;height:29px;background:#e3e3e3;border-radius:12.5px;"></div>
<svg class="abs" style="left:138.29999999999995px;top:115px" width="10" height="11" viewBox="0 0 10 11"><path d="M2 8.2H8.2L7.2 6.8V4.5Q7.2 2.2 5 1.8Q2.8 2.2 2.8 4.5V6.8z" fill="none" stroke="#333" stroke-width="1"/><path d="M4 9.6H6" stroke="#333" stroke-width="1"/><path d="M0.8 10L9.2 0.8" stroke="#333" stroke-width="1"/></svg>
<div class="t" style="left:154.00px;top:115.97px;font-size:9.6px;color:#333;font-weight:400;-webkit-text-stroke:0.18px currentColor">Do Not Disturb</div>
</div>
</body></html>
